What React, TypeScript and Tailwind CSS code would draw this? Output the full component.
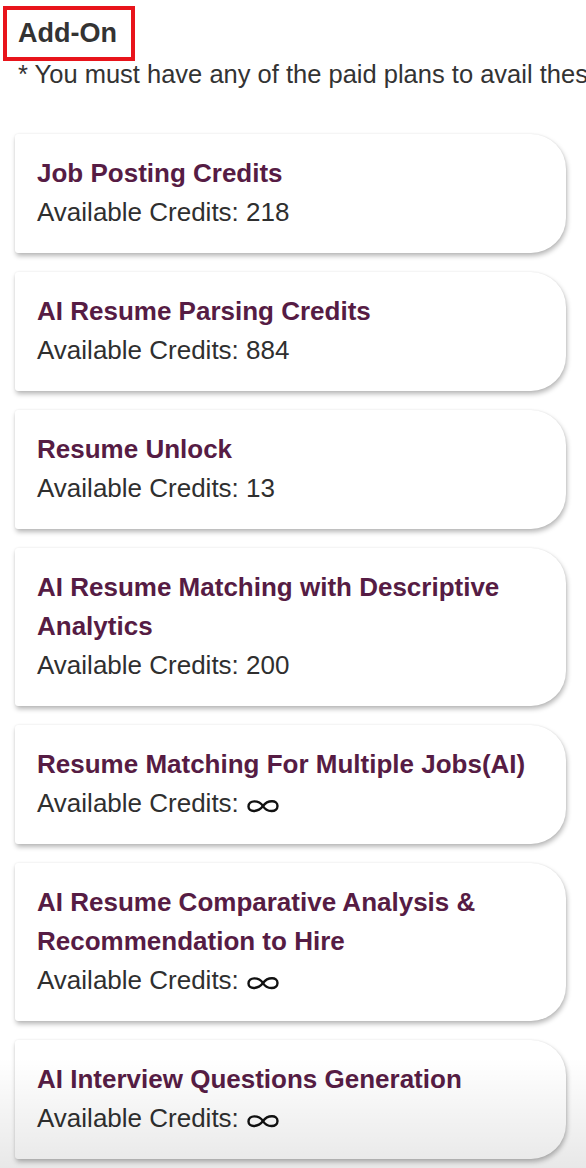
import { type ReactNode } from "react";

type AddOn = {
  title: string;
  credits: number | null; // null = unlimited
};

const ADD_ONS: AddOn[] = [
  { title: "Job Posting Credits", credits: 218 },
  { title: "AI Resume Parsing Credits", credits: 884 },
  { title: "Resume Unlock", credits: 13 },
  { title: "AI Resume Matching with Descriptive Analytics", credits: 200 },
  { title: "Resume Matching For Multiple Jobs(AI)", credits: null },
  {
    title: "AI Resume Comparative Analysis & Recommendation to Hire",
    credits: null,
  },
  { title: "AI Interview Questions Generation", credits: null },
];

function Infinity() {
  return (
    <svg
      width="34"
      height="18"
      viewBox="0 0 34 18"
      fill="none"
      stroke="#111"
      strokeWidth="2.4"
      className="inline-block align-[-3px]"
      aria-label="unlimited"
    >
      <path d="M17 9 C13 3 2.5 2.5 2.5 9.5 C2.5 15.5 12 15.5 17 9 C21.5 3 31.5 2.5 31.5 9 C31.5 15.5 21 16 17 9 Z" />
    </svg>
  );
}

function AddOnCard({ title, children }: { title: string; children: ReactNode }) {
  return (
    <div className="w-[551px] rounded-l-[3px] rounded-r-[35px] bg-white px-[22px] pt-[20px] pb-[21px] shadow-[1px_3px_5px_rgba(0,0,0,0.28),0_0_2px_rgba(0,0,0,0.08)]">
      <div className="text-[26px] font-bold leading-[39px] text-[#561c44]">
        {title}
      </div>
      <div className="text-[26px] leading-[39px] text-[#2f2f2f]">{children}</div>
    </div>
  );
}

export default function App() {
  return (
    <div
      className="relative h-[1168px] w-[586px] overflow-hidden bg-white"
      style={{ fontFamily: '"Liberation Sans", Arial, Helvetica, sans-serif' }}
    >
      <div className="ml-[3px] mt-[6px] inline-block border-4 border-[#e8141b] pl-[11px] pr-[14px]">
        <h2 className="text-[27px] font-bold leading-[47px] text-[#333]">Add-On</h2>
      </div>
      <p className="ml-[18px] whitespace-nowrap text-[25.5px] leading-[26px] text-[#333]">
        * You must have any of the paid plans to avail these add-ons.
      </p>

      <div className="ml-[15px] mt-[47px] flex flex-col gap-[19px]">
        {ADD_ONS.map((a) => (
          <AddOnCard key={a.title} title={a.title}>
            Available Credits: {a.credits === null ? <Infinity /> : a.credits}
          </AddOnCard>
        ))}
      </div>

      <div className="pointer-events-none absolute bottom-0 left-0 h-[110px] w-full bg-gradient-to-b from-transparent to-[rgba(0,0,0,0.09)]" />
    </div>
  );
}
